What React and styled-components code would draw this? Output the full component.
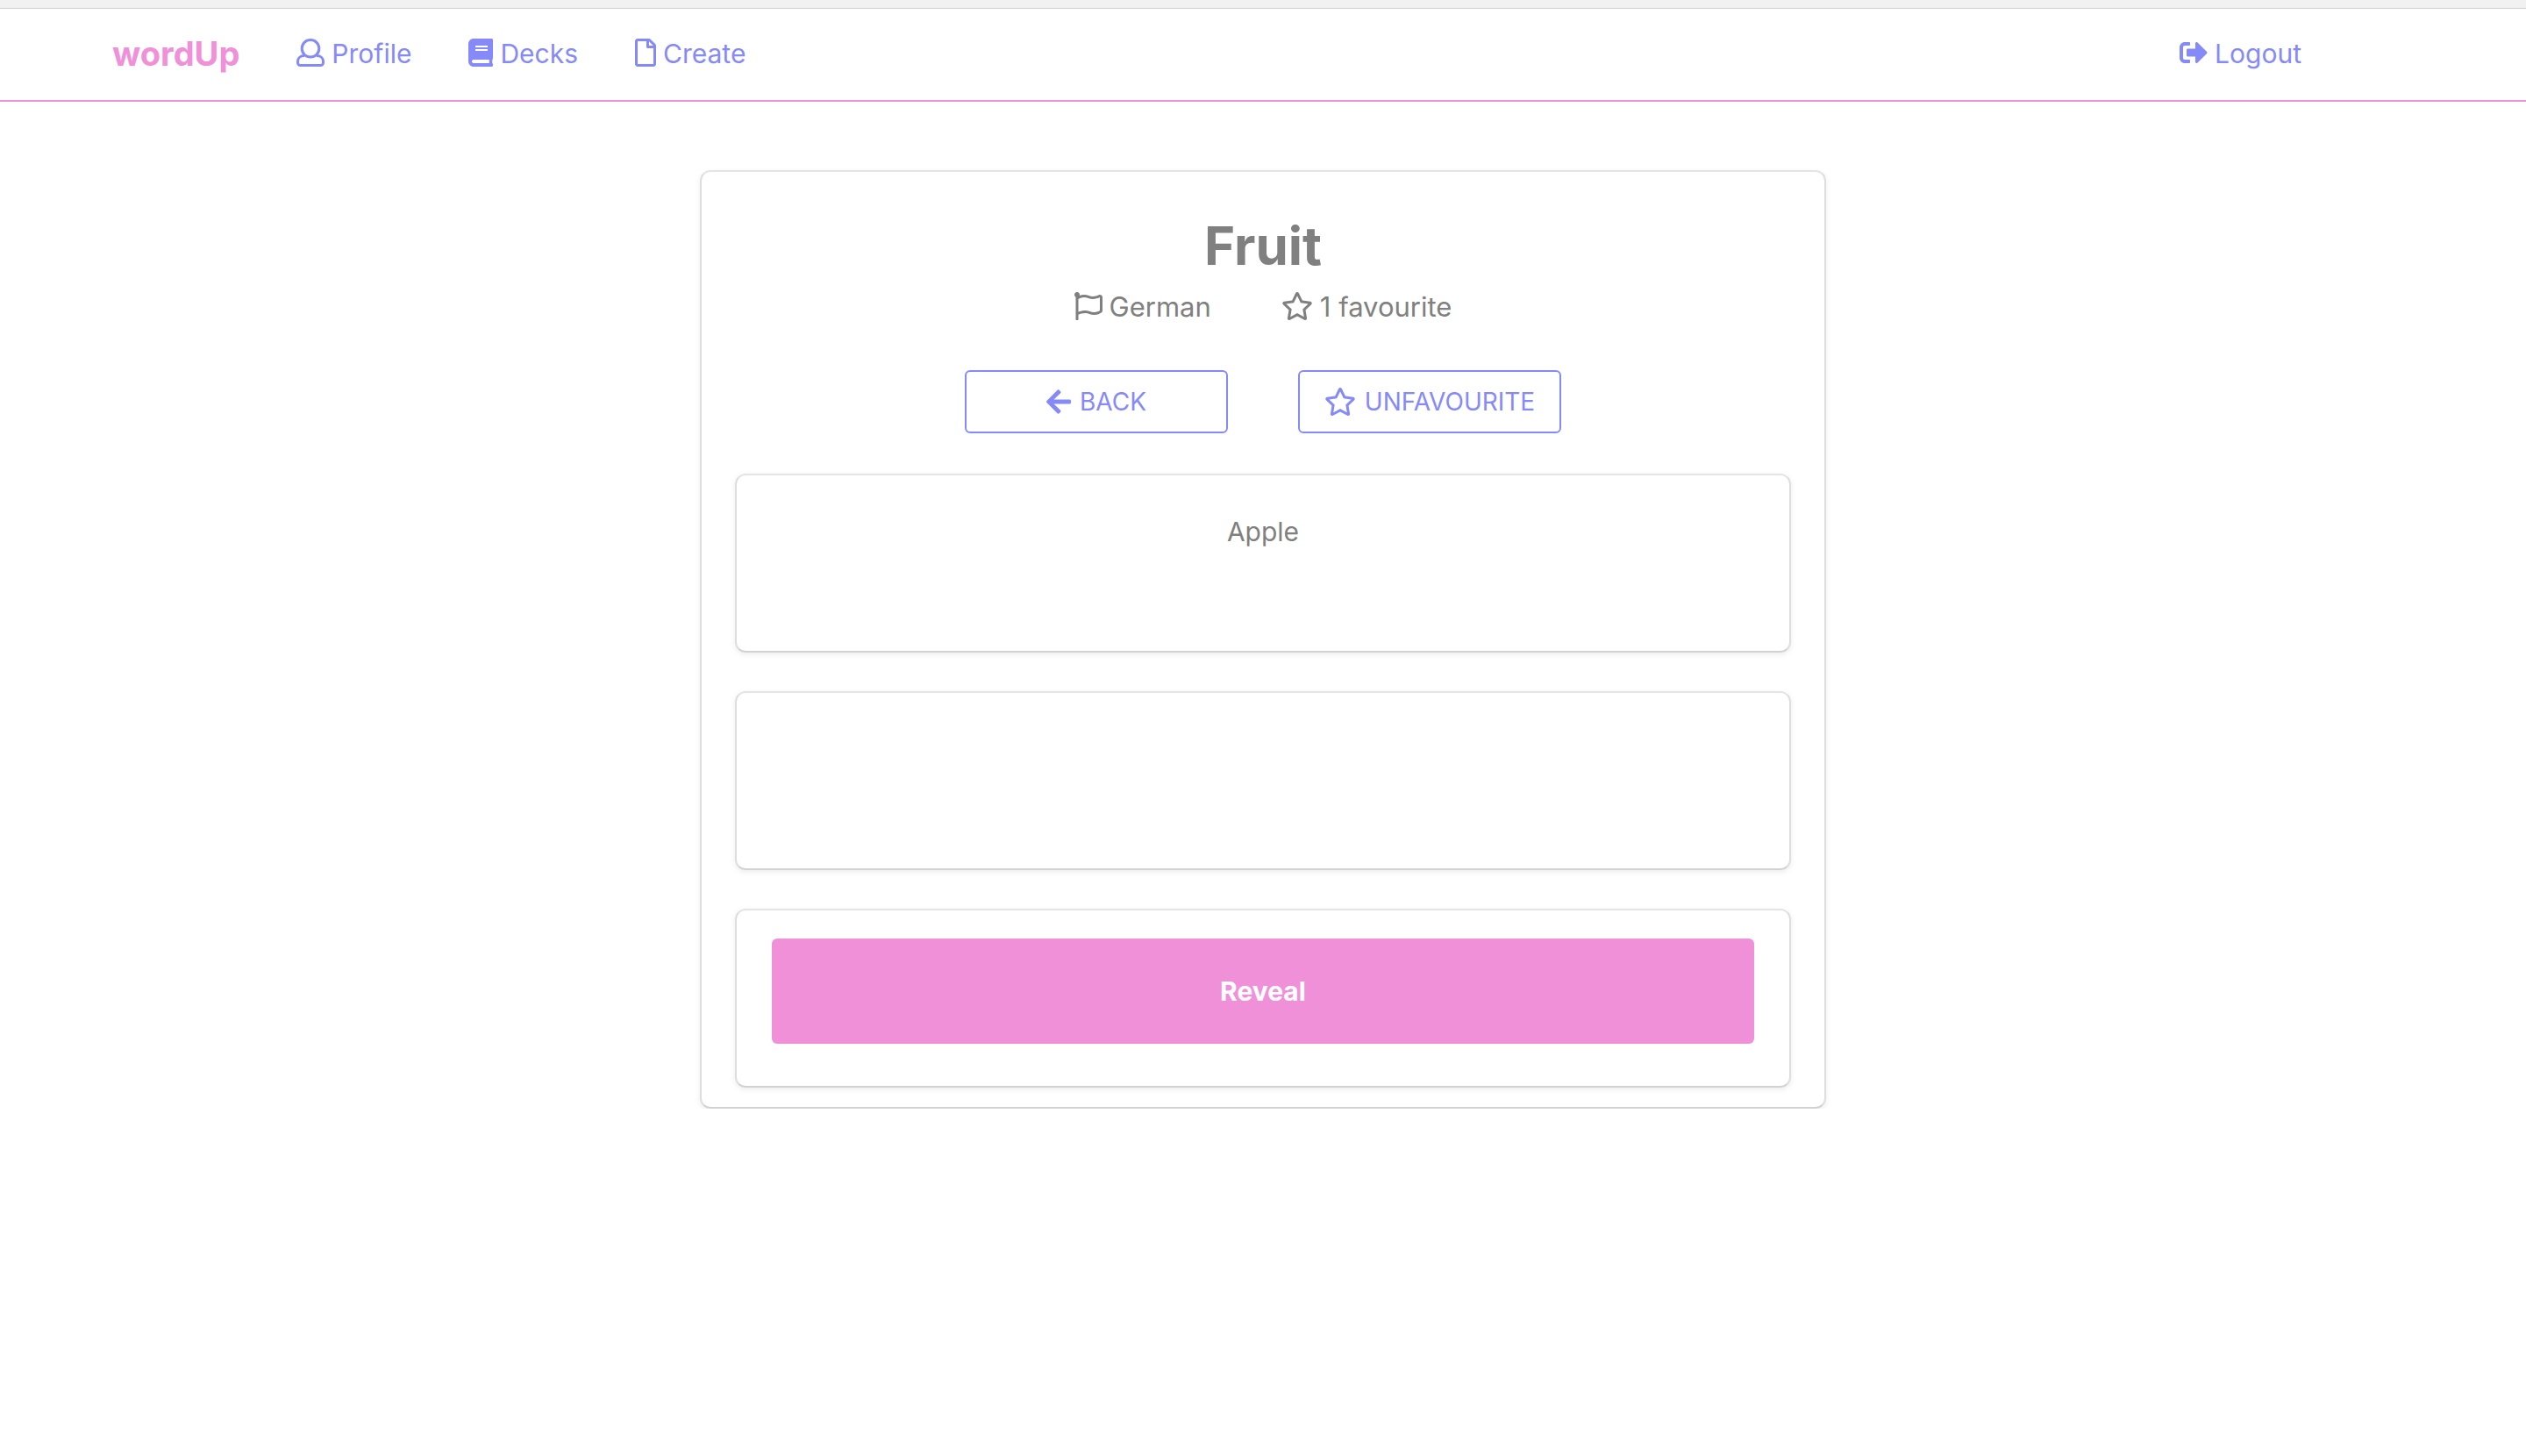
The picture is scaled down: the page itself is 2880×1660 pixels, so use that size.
import React, { useState } from 'react';
import styled, { createGlobalStyle, css } from 'styled-components';
import {
  FaBook,
  FaRegFile,
  FaSignOutAlt,
  FaRegFlag,
  FaRegStar,
  FaArrowLeft,
} from 'react-icons/fa';

const colours = {
  pink: '#f090d9',
  violet: '#868af8',
  grey: '#808080',
};

const GlobalStyle = createGlobalStyle`
  *, *::before, *::after { box-sizing: border-box; }
  body {
    margin: 0;
    background: #fff;
    color: ${colours.grey};
    font-family: Inter, "Liberation Sans", sans-serif;
    font-size: 30px;
    line-height: 36px;
  }
  button { font: inherit; cursor: pointer; }
`;

const TopStrip = styled.div`
  height: 10px;
  background: #f1f1f1;
  border-bottom: 1px solid #d0d0d0;
`;

const NavBar = styled.nav`
  display: flex;
  align-items: center;
  gap: 65px;
  height: 106px;
  padding: 0 256px 2px 128px;
  background: #fff;
  border-bottom: 2px solid ${colours.pink};
`;

const Brand = styled.a`
  color: ${colours.pink};
  font-size: 38px;
  font-weight: 700;
  text-decoration: none;
`;

const Icon = styled.span`
  display: flex;
  flex: none;
  width: ${({ $width = 32 }) => $width}px;
  height: 32px;

  svg { width: 100%; height: 100%; }
`;

const NavLink = styled.a`
  display: flex;
  align-items: center;
  gap: 8px;
  color: ${colours.violet};
  text-decoration: none;
  margin-left: ${({ $end }) => ($end ? 'auto' : '0')};

  ${Icon} { margin-bottom: 2px; }
`;

const panel = css`
  border: 2px solid;
  border-color: #e4e4e4 #dedede #d2d2d2;
  border-radius: 12px;
  box-shadow: 0 2px 6px rgba(0, 0, 0, 0.08);
`;

const Deck = styled.main`
  ${panel}
  display: flex;
  flex-direction: column;
  align-items: center;
  width: calc(100% - 64px);
  max-width: 1284px;
  margin: 78px auto 0;
  padding: 48px 38px 22px;
`;

const Title = styled.h1`
  margin: 0;
  font-size: 60px;
  line-height: 72px;
  font-weight: 700;
`;

const Meta = styled.div`
  display: flex;
  gap: 80px;
  margin-top: 16px;
  font-size: 31px;
`;

const MetaItem = styled.span`
  display: flex;
  align-items: center;
  gap: 8px;

  ${Icon} { margin-bottom: 2px; }
`;

const Actions = styled.div`
  display: flex;
  gap: 80px;
  margin: 54px 0 46px;
`;

const OutlineButton = styled.button`
  display: flex;
  align-items: center;
  justify-content: center;
  gap: 10px;
  width: 300px;
  height: 72px;
  padding: 0;
  border: 2px solid ${colours.violet};
  border-radius: 6px;
  background: transparent;
  color: ${colours.violet};
  font-size: 28px;
  text-transform: uppercase;
`;

const Cards = styled.div`
  display: flex;
  flex-direction: column;
  gap: 44px;
  width: 100%;
`;

const Card = styled.section`
  ${panel}
  min-height: 204px;
  padding: ${({ $flush }) => ($flush ? '32px 40px' : '46px 40px')};
  text-align: center;
`;

const RevealButton = styled.button`
  width: 100%;
  height: 120px;
  border: 0;
  border-radius: 6px;
  background: ${colours.pink};
  color: #fff;
  font-weight: 700;
`;

const UserIcon = () => (
  <svg viewBox="0 0 32 32" fill="none" stroke="currentColor" strokeWidth="3" aria-hidden="true">
    <circle cx="16" cy="11.3" r="9.8" />
    <path d="M9 19.4C4.600 19.400 1.500 22.200 1.500 26V27.500A3 3 0 0 0 4.500 30.500H27.500A3 3 0 0 0 30.500 27.500V26C30.500 22.200 27.400 19.400 23 19.400" />
  </svg>
);

export default function App() {
  const [revealed, setRevealed] = useState(false);

  return (
    <>
      <GlobalStyle />
      <TopStrip />
      <NavBar>
        <Brand href="#home">wordUp</Brand>
        <NavLink href="#profile"><Icon><UserIcon /></Icon>Profile</NavLink>
        <NavLink href="#decks"><Icon $width={28}><FaBook /></Icon>Decks</NavLink>
        <NavLink href="#create"><Icon $width={24}><FaRegFile /></Icon>Create</NavLink>
        <NavLink href="#logout" $end><Icon><FaSignOutAlt /></Icon>Logout</NavLink>
      </NavBar>
      <Deck>
        <Title>Fruit</Title>
        <Meta>
          <MetaItem><Icon><FaRegFlag /></Icon>German</MetaItem>
          <MetaItem><Icon $width={36}><FaRegStar /></Icon>1 favourite</MetaItem>
        </Meta>
        <Actions>
          <OutlineButton type="button"><Icon $width={28}><FaArrowLeft /></Icon>Back</OutlineButton>
          <OutlineButton type="button"><Icon $width={36}><FaRegStar /></Icon>Unfavourite</OutlineButton>
        </Actions>
        <Cards>
          <Card>Apple</Card>
          <Card>{revealed ? 'Apfel' : null}</Card>
          <Card $flush>
            <RevealButton type="button" onClick={() => setRevealed(true)}>Reveal</RevealButton>
          </Card>
        </Cards>
      </Deck>
    </>
  );
}
